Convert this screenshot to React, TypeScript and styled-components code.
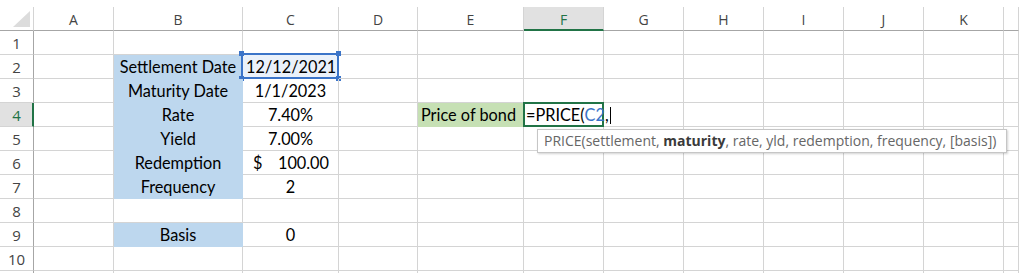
import React from "react";
import styled, { createGlobalStyle, css } from "styled-components";

const GlobalStyle = createGlobalStyle`
  html, body { margin: 0; padding: 0; background: #ffffff; }
  body { width: 1019px; height: 273px; overflow: hidden; }
  #root { width: 1019px; height: 273px; overflow: hidden; }
`;

const GRID = "#d4d4d4";
const HEAD_LINE = "#a6a6a6";
const GREEN = "#217346";
const REF_BLUE = "#3b74c8";

const COLUMNS: { key: string; width: string; label: string }[] = [
  { key: "A", width: "80px", label: "A" },
  { key: "B", width: "129px", label: "B" },
  { key: "C", width: "96px", label: "C" },
  { key: "D", width: "79px", label: "D" },
  { key: "E", width: "106px", label: "E" },
  { key: "F", width: "80px", label: "F" },
  { key: "G", width: "80px", label: "G" },
  { key: "H", width: "80px", label: "H" },
  { key: "I", width: "80px", label: "I" },
  { key: "J", width: "80px", label: "J" },
  { key: "K", width: "80px", label: "K" },
  { key: "L", width: "1fr", label: "" },
];

const ACTIVE_COL = "F";
const ACTIVE_ROW = 4;

const Sheet = styled.div`
  position: relative;
  margin-top: 7px;
  width: 1019px;
  display: grid;
  grid-template-columns: 34px ${COLUMNS.map((c) => c.width).join(" ")};
  grid-auto-rows: 24px;
  overflow: hidden;
`;

const Corner = styled.div`
  box-sizing: border-box;
  border-right: 1px solid ${GRID};
  border-bottom: 1px solid ${HEAD_LINE};
  display: flex;
  align-items: flex-end;
  justify-content: flex-end;
  padding: 0 3px 3px 0;
`;

const ColHead = styled.div<{ $active?: boolean }>`
  box-sizing: border-box;
  border-right: 1px solid ${GRID};
  border-bottom: 1px solid ${HEAD_LINE};
  display: flex;
  align-items: center;
  justify-content: center;
  font-family: "Open Sans", "Noto Sans", sans-serif;
  font-size: 14px;
  color: #444444;
  padding-top: 1px;
  ${(p) =>
    p.$active &&
    css`
      background: #e1e1e1;
      color: ${GREEN};
      border-bottom: 2px solid ${GREEN};
      padding-top: 2px;
    `}
`;

const RowHead = styled.div<{ $active?: boolean }>`
  box-sizing: border-box;
  border-right: 1px solid ${HEAD_LINE};
  border-bottom: 1px solid ${GRID};
  display: flex;
  align-items: center;
  justify-content: center;
  font-family: "Open Sans", "Noto Sans", sans-serif;
  font-size: 15px;
  color: #444444;
  ${(p) =>
    p.$active &&
    css`
      background: #e1e1e1;
      color: ${GREEN};
      border-right: 2px solid ${GREEN};
      padding-left: 1px;
    `}
`;

type Fill = "blue" | "green" | undefined;
const FILLS: Record<string, string> = { blue: "#bdd7ee", green: "#c6e0b4" };

const Cell = styled.div<{ $fill?: Fill; $align?: "left" | "center" | "right" }>`
  position: relative;
  box-sizing: border-box;
  border-right: 1px solid ${GRID};
  border-bottom: 1px solid ${GRID};
  font-family: Lato, "Liberation Sans", sans-serif;
  font-size: 16.3px;
  line-height: 23px;
  color: #000000;
  white-space: nowrap;
  padding: 0 3px;
  text-align: ${(p) => p.$align ?? "left"};
  ${(p) =>
    p.$fill &&
    css`
      background: ${FILLS[p.$fill]};
      border-color: ${FILLS[p.$fill]};
    `}
`;

const Accounting = styled.div`
  display: flex;
  justify-content: space-between;
  padding: 0 6px 0 7px;
`;

const RefHighlight = styled.div`
  position: absolute;
  top: -2px;
  left: -2px;
  right: -1px;
  bottom: -1px;
  border: 2px solid ${REF_BLUE};
  background: #eaf1fa;
  z-index: 0;
`;

const Handle = styled.span<{ $x: "l" | "r"; $y: "t" | "b" }>`
  position: absolute;
  width: 5px;
  height: 5px;
  background: ${REF_BLUE};
  ${(p) => (p.$x === "l" ? "left: -4px;" : "right: -4px;")}
  ${(p) => (p.$y === "t" ? "top: -4px;" : "bottom: -4px;")}
`;

const CellText = styled.span`
  position: relative;
  z-index: 1;
`;

const ActiveBorder = styled.div`
  position: absolute;
  top: -1px;
  left: -1px;
  right: -1px;
  bottom: -1px;
  border: 2px solid ${GREEN};
  pointer-events: none;
  z-index: 2;
`;

const Formula = styled.span`
  position: relative;
  z-index: 3;
  display: inline-flex;
  align-items: center;
  margin-left: -1px;
`;

const RefText = styled.span`
  color: ${REF_BLUE};
`;

const Caret = styled.span`
  display: inline-block;
  width: 1px;
  height: 17px;
  background: #000;
  margin-left: 1px;
  margin-top: 1px;
`;

const Tooltip = styled.div`
  position: absolute;
  left: 537px;
  top: 122px;
  width: 470px;
  height: 24px;
  box-sizing: border-box;
  background: #ffffff;
  border: 1px solid #c6c6c6;
  box-shadow: 1px 1px 2px rgba(0, 0, 0, 0.18);
  font-family: "Open Sans", "Noto Sans", sans-serif;
  font-size: 14px;
  line-height: 22px;
  color: #666666;
  padding-left: 6px;
  white-space: nowrap;
  z-index: 5;
`;

const Bold = styled.b`
  color: #3a3a3a;
  font-weight: 700;
`;

const CornerTriangle = () => (
  <svg width="17" height="16" viewBox="0 0 17 16">
    <polygon points="0,16 17,16 17,0" fill="#dcdcdc" />
  </svg>
);

type CellDef = {
  text?: React.ReactNode;
  fill?: Fill;
  align?: "left" | "center" | "right";
  kind?: "ref" | "active" | "accounting";
};

const DATA: Record<number, Record<string, CellDef>> = {
  2: {
    B: { text: "Settlement Date", fill: "blue", align: "center" },
    C: { text: "12/12/2021", align: "center", kind: "ref" },
  },
  3: {
    B: { text: "Maturity Date", fill: "blue", align: "center" },
    C: { text: "1/1/2023", align: "center" },
  },
  4: {
    B: { text: "Rate", fill: "blue", align: "center" },
    C: { text: "7.40%", align: "center" },
    E: { text: "Price of bond", fill: "green", align: "left" },
    F: { kind: "active" },
  },
  5: {
    B: { text: "Yield", fill: "blue", align: "center" },
    C: { text: "7.00%", align: "center" },
  },
  6: {
    B: { text: "Redemption", fill: "blue", align: "center" },
    C: { kind: "accounting" },
  },
  7: {
    B: { text: "Frequency", fill: "blue", align: "center" },
    C: { text: "2", align: "center" },
  },
  9: {
    B: { text: "Basis", fill: "blue", align: "center" },
    C: { text: "0", align: "center" },
  },
};

const renderCell = (row: number, col: string) => {
  const def = DATA[row]?.[col];
  const key = `${col}${row}`;
  if (!def) return <Cell key={key} />;
  if (def.kind === "ref") {
    return (
      <Cell key={key} $align={def.align}>
        <RefHighlight>
          <Handle $x="l" $y="t" />
          <Handle $x="r" $y="t" />
          <Handle $x="l" $y="b" />
          <Handle $x="r" $y="b" />
        </RefHighlight>
        <CellText>{def.text}</CellText>
      </Cell>
    );
  }
  if (def.kind === "active") {
    return (
      <Cell key={key}>
        <ActiveBorder />
        <Formula>
          =PRICE(<RefText>C2</RefText>,<Caret />
        </Formula>
      </Cell>
    );
  }
  if (def.kind === "accounting") {
    return (
      <Cell key={key}>
        <Accounting>
          <span>$</span>
          <span>100.00</span>
        </Accounting>
      </Cell>
    );
  }
  return (
    <Cell key={key} $fill={def.fill} $align={def.align}>
      {def.text}
    </Cell>
  );
};

const ROWS = Array.from({ length: 11 }, (_, i) => i + 1);
const VISIBLE_ROWS = 10;

export default function App() {
  return (
    <>
      <GlobalStyle />
      <Sheet>
        <Corner>
          <CornerTriangle />
        </Corner>
        {COLUMNS.map((c) => (
          <ColHead key={c.key} $active={c.key === ACTIVE_COL}>
            {c.label}
          </ColHead>
        ))}
        {ROWS.map((r) => (
          <React.Fragment key={r}>
            <RowHead $active={r === ACTIVE_ROW}>{r <= VISIBLE_ROWS ? r : ""}</RowHead>
            {COLUMNS.map((c) => renderCell(r, c.key))}
          </React.Fragment>
        ))}
        <Tooltip>
          PRICE(settlement, <Bold>maturity</Bold>, rate, yld, redemption, frequency, [basis])
        </Tooltip>
      </Sheet>
    </>
  );
}
